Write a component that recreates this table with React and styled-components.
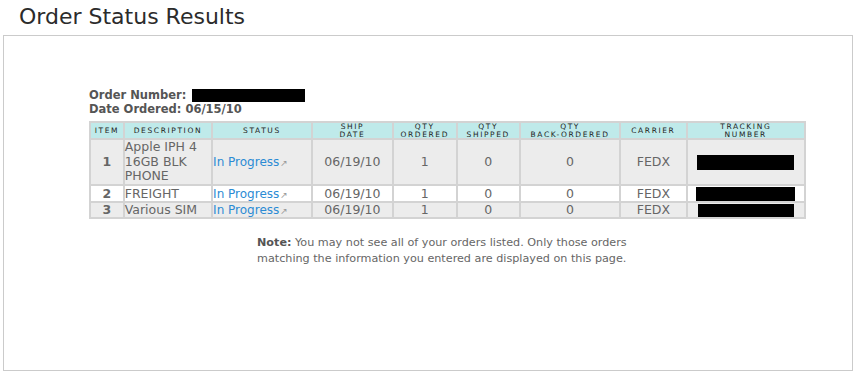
import React from 'react';
import styled, { createGlobalStyle } from 'styled-components';

const GlobalStyle = createGlobalStyle`
    html, body {
        margin: 0;
        padding: 0;
        background: white;
        font-family: "DejaVu Sans", Verdana, sans-serif;
    }
`;

const Page = styled.div`
    width: 858px;
    height: 375px;
    overflow: hidden;
`;

const Title = styled.h1`
    margin: 0;
    padding: 4px 0 0 19px;
    height: 35px;
    box-sizing: border-box;
    font-size: 22px;
    font-weight: normal;
    line-height: 26px;
    color: #2b2b2b;
`;

const Box = styled.div`
    margin: 0 5px 0 3px;
    height: 336px;
    border: 1px solid #cbcbcb;
    box-sizing: border-box;
    padding: 52px 0 0 85px;
`;

const Meta = styled.div`
    font-size: 11.5px;
    font-weight: bold;
    color: #555;
    line-height: 14px;
    display: flex;
    align-items: center;
    gap: 6px;
`;

const Redacted = styled.span`
    display: ${p => (p.block ? 'block' : 'inline-block')};
    margin: ${p => (p.block ? '0 auto' : '0')};
    background: #000;
    width: ${p => p.w}px;
    height: ${p => p.h}px;
`;

const Table = styled.table`
    margin-top: 5px;
    width: 717px;
    border-collapse: collapse;
    border: 2px solid #d3d3d3;
    font-size: 12.5px;
    color: #666;
`;

const Th = styled.th`
    background: #bfeaea;
    border: 2px solid #d3d3d3;
    height: 14px;
    padding: 0;
    font-size: 7.5px;
    font-weight: normal;
    letter-spacing: 1.6px;
    line-height: 7.5px;
    color: #222;
    text-transform: uppercase;
    text-align: center;
    vertical-align: middle;
    width: ${p => p.w}px;
`;

const Row = styled.tr`
    background: ${p => (p.odd ? '#ececec' : '#fff')};
`;

const Td = styled.td`
    border: 2px solid #d3d3d3;
    padding: 0;
    height: 14px;
    line-height: ${p => p.lh || 15}px;
    text-align: ${p => p.align || 'center'};
    vertical-align: middle;
    font-weight: ${p => (p.bold ? 'bold' : 'normal')};
`;

const StatusLink = styled.a`
    color: #2b8bd4;
    text-decoration: none;
    font-size: 12px;
    line-height: 1;
`;

const Arrow = styled.span`
    color: #999;
    font-size: 9px;
    line-height: 1;
    margin-left: 1px;
`;

const Note = styled.p`
    width: 390px;
    margin: 16px 0 0 168px;
    font-size: 11.2px;
    line-height: 16px;
    color: #666;

    b {
        color: #555;
    }
`;

const columns = [
    ['Item', 32],
    ['Description', 87],
    ['Status', 99],
    ['Ship<br>Date', 80],
    ['Qty<br>Ordered', 62],
    ['Qty<br>Shipped', 62],
    ['Qty<br>Back-Ordered', 100],
    ['Carrier', 65],
    ['Tracking<br>Number', 117],
];

const orders = [
    { item: 1, desc: 'Apple IPH 4 16GB BLK PHONE', track: [97, 15], lh: 14.7 },
    { item: 2, desc: 'FREIGHT', track: [99, 14], lh: 15 },
    { item: 3, desc: 'Various SIM', track: [96, 13], lh: 14 },
];

function App() {
    return (
        <Page>
            <GlobalStyle />
            <Title>Order Status Results</Title>
            <Box>
                <Meta>Order Number: <Redacted w={113} h={13} /></Meta>
                <Meta>Date Ordered: 06/15/10</Meta>
                <Table>
                    <thead>
                        <tr>
                            {columns.map(([label, w]) => (
                                <Th key={label} w={w} dangerouslySetInnerHTML={{ __html: label }} />
                            ))}
                        </tr>
                    </thead>
                    <tbody>
                        {orders.map((o, i) => (
                            <Row key={o.item} odd={i % 2 === 0}>
                                <Td lh={o.lh} bold>{o.item}</Td>
                                <Td lh={o.lh} align="left">{o.desc}</Td>
                                <Td lh={o.lh} align="left">
                                    <StatusLink href="#">In Progress</StatusLink>
                                    <Arrow>↗</Arrow>
                                </Td>
                                <Td lh={o.lh}>06/19/10</Td>
                                <Td lh={o.lh}>1</Td>
                                <Td lh={o.lh}>0</Td>
                                <Td lh={o.lh}>0</Td>
                                <Td lh={o.lh}>FEDX</Td>
                                <Td lh={o.lh}>
                                    <Redacted block w={o.track[0]} h={o.track[1]} />
                                </Td>
                            </Row>
                        ))}
                    </tbody>
                </Table>
                <Note>
                    <b>Note:</b> You may not see all of your orders listed. Only those orders
                    matching the information you entered are displayed on this page.
                </Note>
            </Box>
        </Page>
    );
}

export default App;
